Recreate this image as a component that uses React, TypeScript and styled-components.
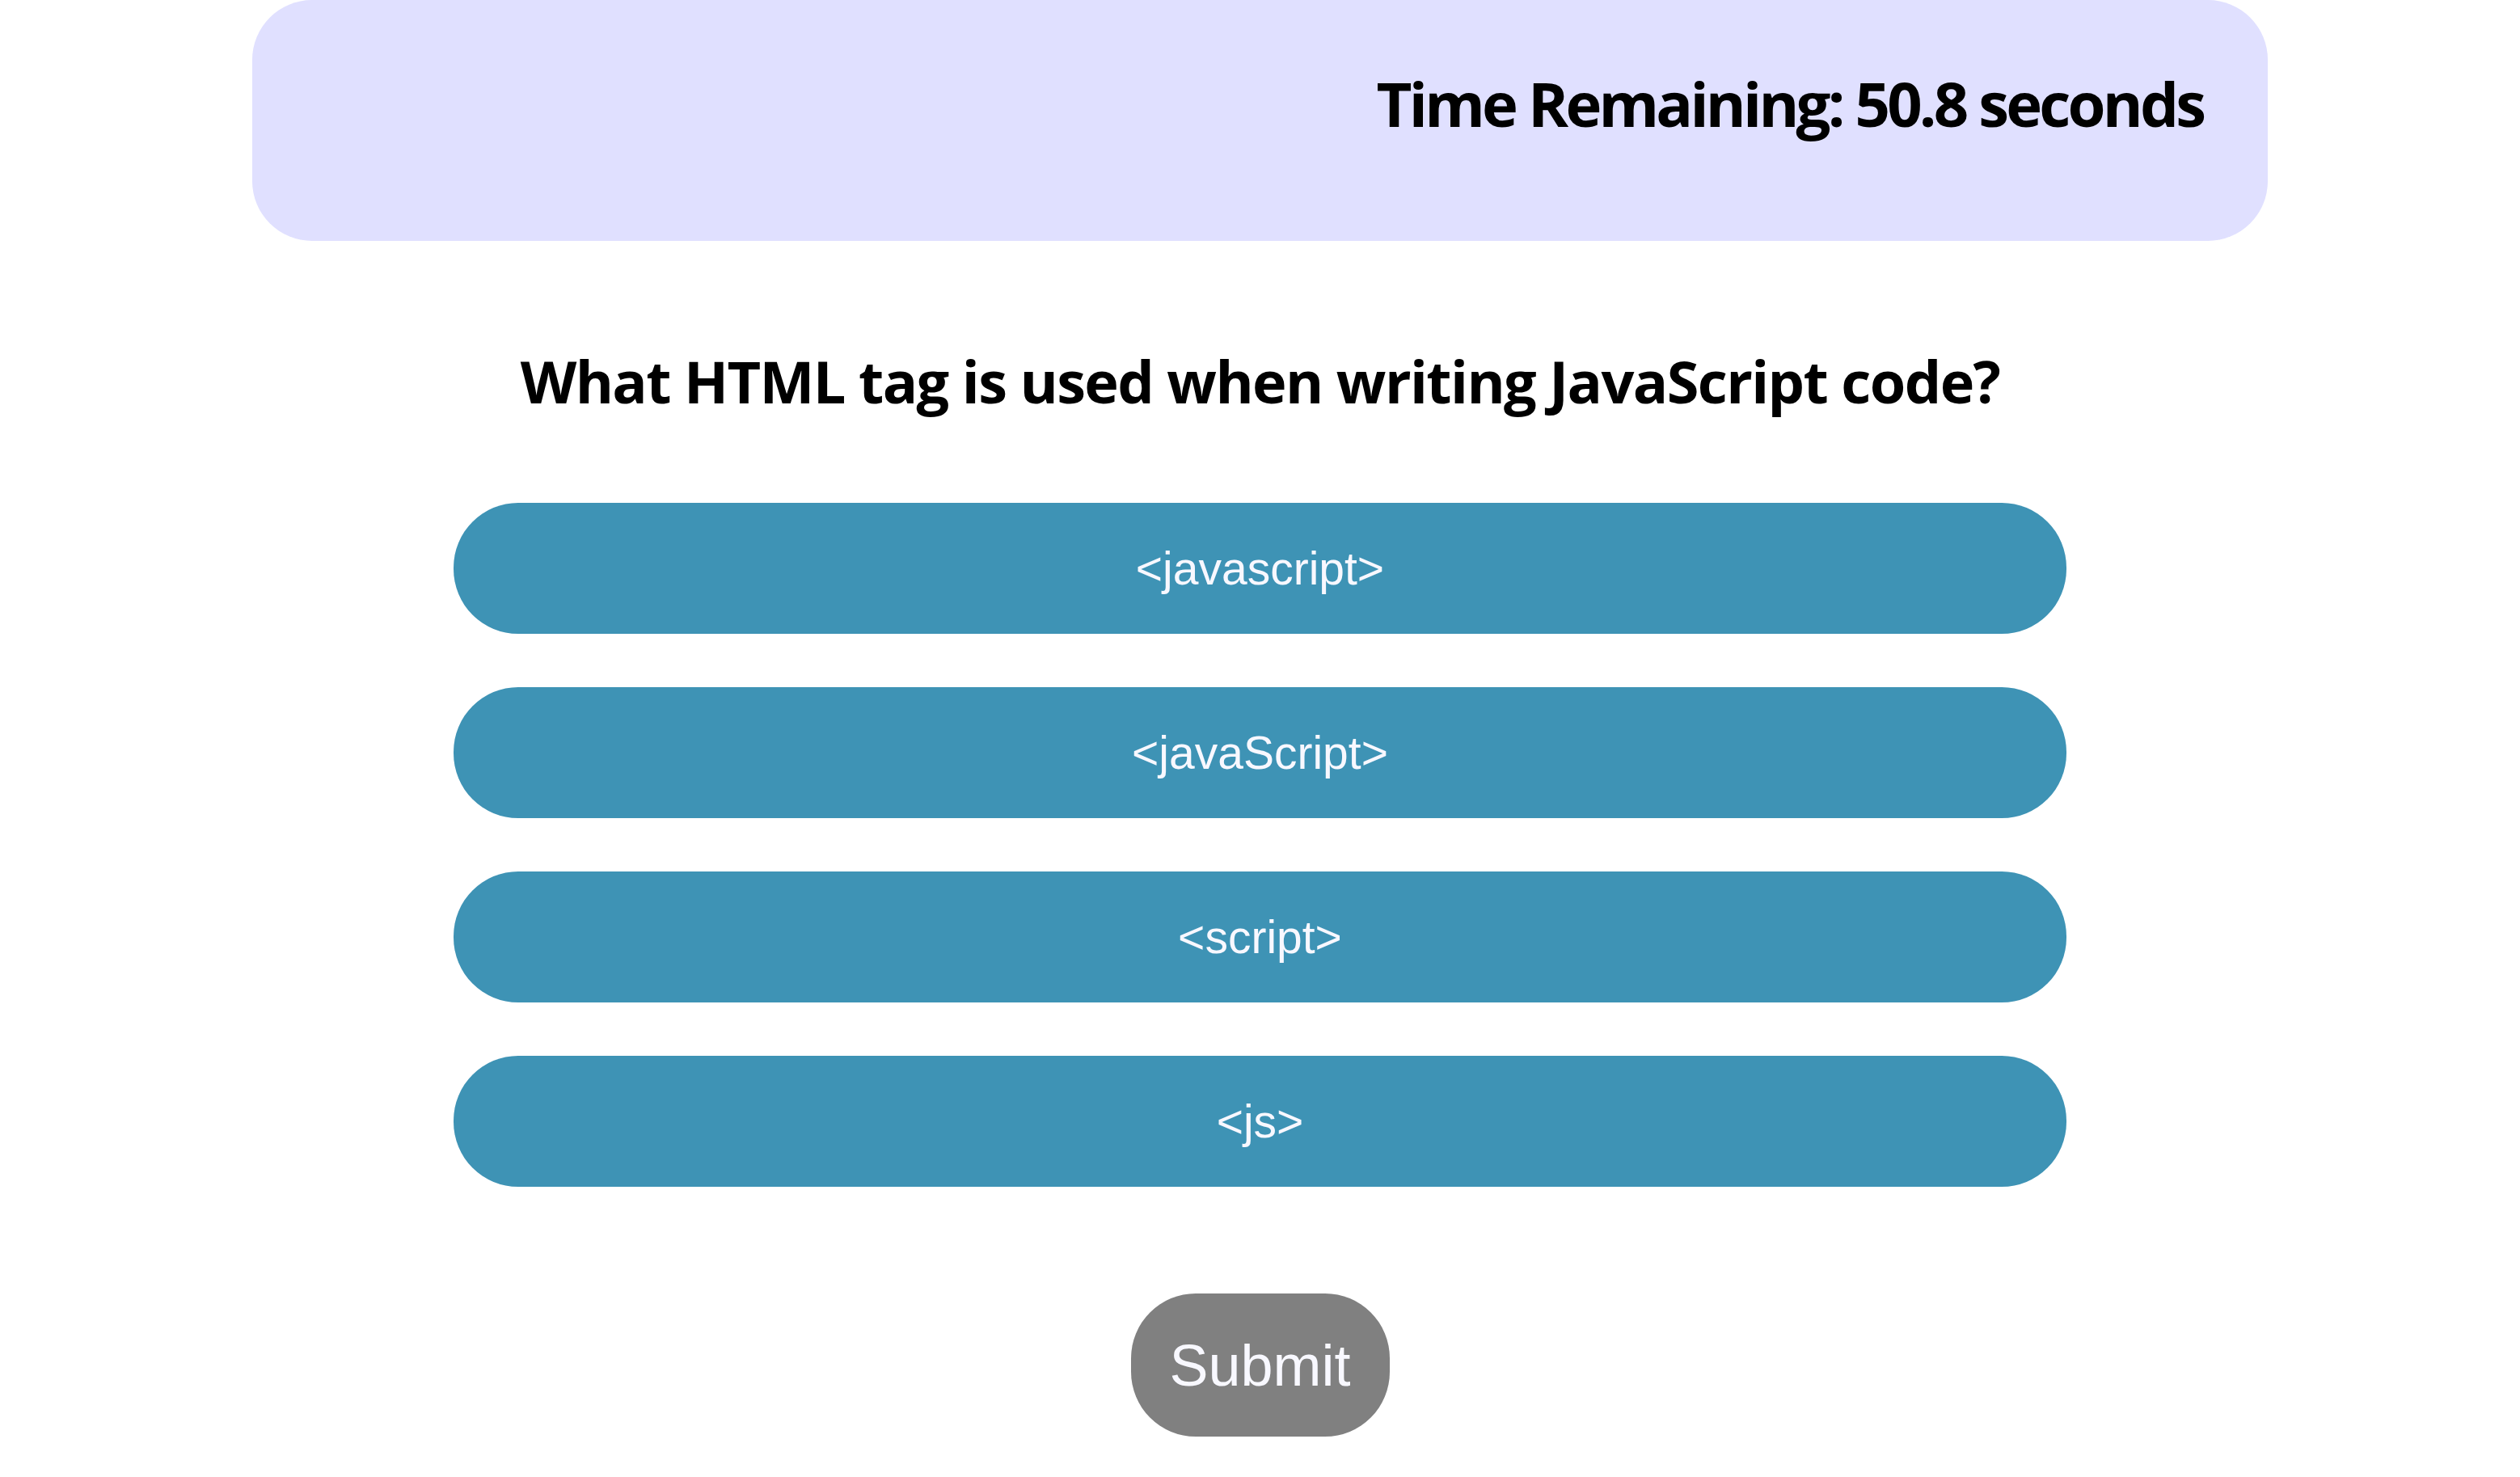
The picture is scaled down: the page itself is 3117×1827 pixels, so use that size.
import styled, { createGlobalStyle } from "styled-components";
import { useState } from "react";

const GlobalStyle = createGlobalStyle`
  body {
    margin: 0;
    background-color: white;
    font-family: "Liberation Sans", Arial, sans-serif;
  }
`;

const options = ["<javascript>", "<javaScript>", "<script>", "<js>"];

const App = () => {
  const [selected, setSelected] = useState<number | null>(null);

  return (
    <>
      <GlobalStyle />
      <Page>
        <Header>
          <Timer>Time Remaining: 50.8 seconds</Timer>
        </Header>
        <Question>What HTML tag is used when writing JavaScript code?</Question>
        <OptionList>
          {options.map((option, i) => (
            <Option
              key={option}
              active={selected === i}
              onClick={() => setSelected(i)}
            >
              {option}
            </Option>
          ))}
        </OptionList>
        <SubmitButton>Submit</SubmitButton>
      </Page>
    </>
  );
};

export default App;

const Page = styled.div`
  display: flex;
  flex-direction: column;
  align-items: center;
  width: 100%;
`;

const Header = styled.header`
  width: 80%;
  height: 298px;
  box-sizing: border-box;
  padding: 90px 80px 0 80px;
  display: flex;
  justify-content: flex-end;
  align-items: flex-start;
  background-color: #e0e0ff;
  border-radius: 74px;
`;

const Timer = styled.h2`
  margin: 0;
  font-family: "Open Sans", "Noto Sans", sans-serif;
  font-weight: 700;
  font-size: 76px;
  line-height: 1;
  letter-spacing: -3.8px;
  color: black;
`;

const Question = styled.h1`
  margin: 137px 0 0 0;
  font-family: "Open Sans", "Noto Sans", sans-serif;
  font-weight: 700;
  font-size: 72px;
  line-height: 1;
  letter-spacing: -1.6px;
  color: black;
  text-align: center;
`;

const OptionList = styled.div`
  width: 64%;
  margin-top: 115px;
  display: flex;
  flex-direction: column;
  gap: 66px;
`;

const Option = styled.button<{ active: boolean }>`
  height: 162px;
  width: 100%;
  border: none;
  border-radius: 80px;
  background-color: ${({ active }) => (active ? "#2f7a98" : "#3e93b5")};
  color: #f8f8ff;
  font-family: "Liberation Sans", Arial, sans-serif;
  font-size: 57px;
  cursor: pointer;
`;

const SubmitButton = styled.button`
  margin-top: 132px;
  width: 320px;
  height: 177px;
  border: none;
  border-radius: 80px;
  background-color: #808080;
  color: #f8f8ff;
  font-family: "Liberation Sans", Arial, sans-serif;
  font-size: 72px;
  cursor: pointer;
`;
